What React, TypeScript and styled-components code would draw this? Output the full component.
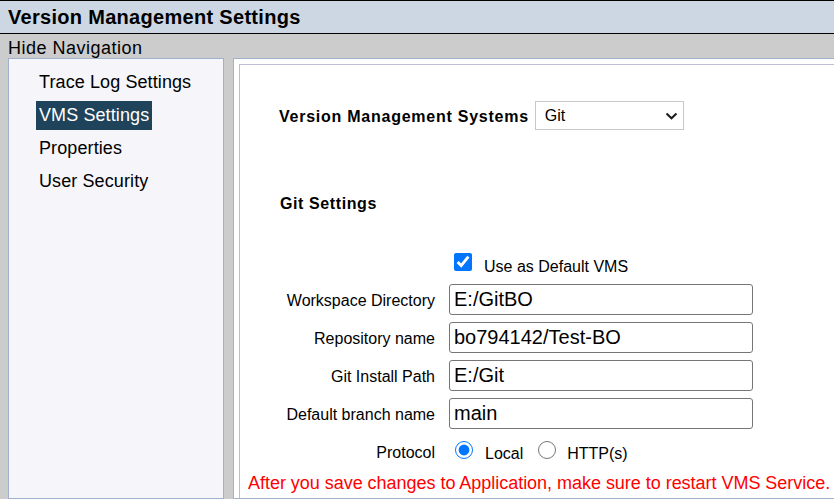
import React from "react";
import styled, { createGlobalStyle } from "styled-components";

const GlobalStyle = createGlobalStyle`
  html, body {
    margin: 0;
    padding: 0;
    overflow: hidden;
  }
  body {
    font-family: "Liberation Sans", Arial, sans-serif;
    color: #000;
  }
`;

const Page = styled.div`
  width: 834px;
  height: 499px;
  display: flex;
  flex-direction: column;
  overflow: hidden;
`;

const TitleBar = styled.div`
  height: 32px;
  line-height: 33px;
  border-top: 1px solid #000;
  border-bottom: 1px solid #000;
  background: #cdd7e4;
  padding-left: 8px;
  font-size: 20px;
  font-weight: bold;
  letter-spacing: 0.3px;
  overflow: hidden;
`;

const NavToggle = styled.div`
  height: 22px;
  padding: 2px 0 0 8px;
  line-height: 25px;
  background: #cccccc;
  font-size: 18px;
  letter-spacing: 0.5px;
`;

const Body = styled.div`
  flex: 1;
  min-height: 0;
  display: flex;
  gap: 9px;
  padding-left: 8px;
  background: #cccccc;
  border-left: 1px solid #b4b4b4;
  margin-left: -1px;
  overflow: hidden;
`;

const NavPanel = styled.nav`
  flex: 0 0 216px;
  box-sizing: border-box;
  border: 1px solid #9fb1cc;
  background: #f5f5fa;
  padding: 9px 0 0 27px;
`;

const NavItem = styled.div`
  height: 29px;
  margin-bottom: 4px;
`;

const NavLabel = styled.span<{ $active?: boolean }>`
  display: inline-block;
  padding: 0 3px;
  line-height: 29px;
  font-size: 18px;
  letter-spacing: 0.1px;
  color: ${(p) => (p.$active ? "#fff" : "#000")};
  background: ${(p) => (p.$active ? "#1f435a" : "transparent")};
`;

const MainPanel = styled.main`
  flex: 0 0 640px;
  box-sizing: border-box;
  border: 1px solid #9fb1cc;
  border-right: none;
  background: #fff;
  padding: 5px 0 0 5px;
`;

const ContentBox = styled.div`
  box-sizing: border-box;
  height: 100%;
  border: 1px solid #bdbdd6;
  border-right: none;
  border-bottom: none;
`;

const VmsRow = styled.div`
  display: flex;
  align-items: center;
  gap: 6px;
  margin: 36px 0 0 39px;
`;

const BoldLabel = styled.span`
  padding-top: 2px;
  font-size: 16px;
  font-weight: bold;
  letter-spacing: 0.75px;
`;

const SelectBox = styled.div`
  box-sizing: border-box;
  width: 149px;
  height: 29px;
  border: 1px solid #c8c8c8;
  display: flex;
  align-items: center;
  justify-content: space-between;
  padding: 1px 5px 0 9px;
  font-size: 16px;
`;

const SectionHeading = styled.div`
  margin: 64px 0 0 40px;
  line-height: 20px;
  font-size: 16px;
  font-weight: bold;
  letter-spacing: 0.6px;
`;

const FormGrid = styled.div`
  display: grid;
  grid-template-columns: 195px 304px;
  column-gap: 14px;
  row-gap: 7px;
  margin-top: 38px;
`;

const FieldLabel = styled.label<{ $bottom?: number }>`
  justify-self: end;
  align-self: end;
  padding-bottom: ${(p) => p.$bottom ?? 5}px;
  font-size: 16px;
  line-height: 18px;
`;

const TextInput = styled.input`
  box-sizing: border-box;
  width: 304px;
  height: 31px;
  margin: 0;
  padding: 0 4px;
  border: 1px solid #767676;
  border-radius: 3px;
  font-family: "Liberation Sans", Arial, sans-serif;
  font-size: 20px;
  color: #000;
  background: #fff;
  outline: none;
`;

const ControlRow = styled.div<{ $height: number }>`
  grid-column: 2;
  height: ${(p) => p.$height}px;
  display: flex;
  align-items: flex-start;
`;

const Check = styled.input`
  width: 18px;
  height: 18px;
  margin: 1px 0 0 5px;
  accent-color: #0075ff;
  flex: none;
`;

const Radio = styled.input<{ $left: number }>`
  width: 18px;
  height: 18px;
  margin: 5px 0 0 ${(p) => p.$left}px;
  accent-color: #0075ff;
  flex: none;
`;

const OptionText = styled.span<{ $gap: number; $top: number }>`
  margin-left: ${(p) => p.$gap}px;
  padding-top: ${(p) => p.$top}px;
  font-size: 16px;
  line-height: 25px;
`;

const Warning = styled.div`
  margin: 8px 0 0 8px;
  font-size: 18px;
  line-height: 22px;
  letter-spacing: -0.03px;
  color: #ff0000;
  white-space: nowrap;
`;

const Chevron = () => (
  <svg width="13" height="8" viewBox="0 0 13 8">
    <polyline
      points="1.5,1.5 6.5,6.3 11.5,1.5"
      fill="none"
      stroke="#1a1a1a"
      strokeWidth="2"
    />
  </svg>
);

const navItems = ["Trace Log Settings", "VMS Settings", "Properties", "User Security"];

const fields = [
  { label: "Workspace Directory", value: "E:/GitBO" },
  { label: "Repository name", value: "bo794142/Test-BO" },
  { label: "Git Install Path", value: "E:/Git" },
  { label: "Default branch name", value: "main" },
];

const App: React.FC = () => {
  return (
    <>
      <GlobalStyle />
      <Page>
        <TitleBar>Version Management Settings</TitleBar>
        <NavToggle>Hide Navigation</NavToggle>
        <Body>
          <NavPanel>
            {navItems.map((item) => (
              <NavItem key={item}>
                <NavLabel $active={item === "VMS Settings"}>{item}</NavLabel>
              </NavItem>
            ))}
          </NavPanel>
          <MainPanel>
            <ContentBox>
              <VmsRow>
                <BoldLabel>Version Management Systems</BoldLabel>
                <SelectBox>
                  <span>Git</span>
                  <Chevron />
                </SelectBox>
              </VmsRow>

              <SectionHeading>Git Settings</SectionHeading>

              <FormGrid>
                <ControlRow $height={25}>
                  <Check type="checkbox" defaultChecked />
                  <OptionText $gap={12} $top={2}>
                    Use as Default VMS
                  </OptionText>
                </ControlRow>

                {fields.map((f) => (
                  <React.Fragment key={f.label}>
                    <FieldLabel>{f.label}</FieldLabel>
                    <TextInput defaultValue={f.value} />
                  </React.Fragment>
                ))}

                <FieldLabel $bottom={2}>Protocol</FieldLabel>
                <ControlRow $height={28}>
                  <Radio type="radio" name="protocol" defaultChecked $left={6} />
                  <OptionText $gap={12} $top={5}>
                    Local
                  </OptionText>
                  <Radio type="radio" name="protocol" $left={15} />
                  <OptionText $gap={11} $top={5}>
                    HTTP(s)
                  </OptionText>
                </ControlRow>
              </FormGrid>

              <Warning>
                After you save changes to Application, make sure to restart VMS Service.
              </Warning>
            </ContentBox>
          </MainPanel>
        </Body>
      </Page>
    </>
  );
};

export default App;
